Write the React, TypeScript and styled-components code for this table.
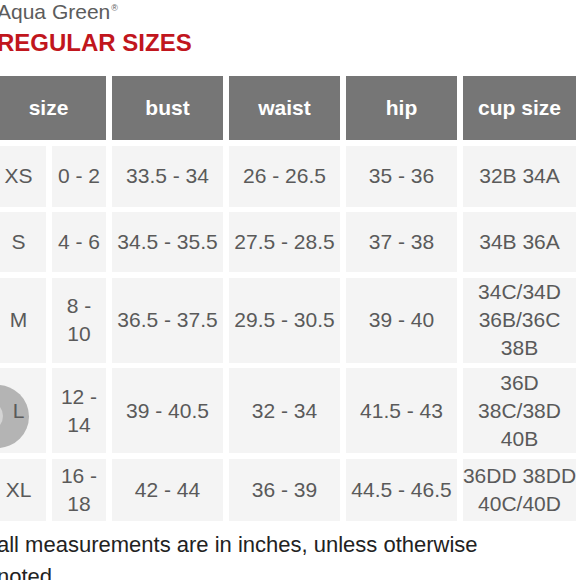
import React from 'react';
import styled, { createGlobalStyle } from 'styled-components';

const GlobalStyle = createGlobalStyle`
  html, body {
    margin: 0;
    padding: 0;
    background: #ffffff;
    overflow: hidden;
  }
  body {
    font-family: 'Liberation Sans', Arial, Helvetica, sans-serif;
  }
`;

const Page = styled.div`
  width: 590px;
  height: 580px;
  margin-left: -3px;
  overflow: hidden;
`;

const Brand = styled.div`
  font-size: 21px;
  line-height: 24px;
  color: #5c5c5c;
  white-space: nowrap;
`;

const Reg = styled.sup`
  font-size: 9px;
  vertical-align: top;
  position: relative;
  top: -4px;
  margin-left: 1px;
`;

const Title = styled.h1`
  margin: 5px 0 0;
  font-size: 24px;
  line-height: 28px;
  font-weight: bold;
  color: #c1161d;
  white-space: nowrap;
`;

const Table = styled.div`
  margin: 19px 0 0 -6px;
  display: grid;
  grid-template-columns: 55px 54px 111px 111px 111px 113px;
  grid-template-rows: 64px 61px 60px 85px 85px 62px;
  column-gap: 6px;
  row-gap: 5.5px;
`;

const HeadCell = styled.div<{ $span?: number }>`
  grid-column: span ${p => p.$span || 1};
  background: #767676;
  color: #ffffff;
  font-weight: bold;
  font-size: 21px;
  display: flex;
  align-items: center;
  justify-content: center;
  white-space: nowrap;
`;

const Cell = styled.div`
  position: relative;
  background: #f4f4f4;
  color: #5a5a5a;
  font-size: 21px;
  line-height: 28px;
  display: flex;
  align-items: center;
  justify-content: center;
  text-align: center;
  white-space: nowrap;
`;

const CellText = styled.span`
  position: relative;
  z-index: 1;
`;

const TouchButton = styled.div`
  position: absolute;
  left: -25px;
  top: 17px;
  width: 63px;
  height: 63px;
  border-radius: 50%;
  background: #b4b4b4;
  overflow: hidden;
`;

const TouchInner = styled.div`
  position: absolute;
  left: 7px;
  top: 16px;
  width: 30px;
  height: 30px;
  border-radius: 50%;
  background: #d4d4d4;
`;

const Note = styled.p`
  margin: 8px 0 0;
  font-size: 22px;
  line-height: 32px;
  color: #222222;
  width: 500px;
`;

type Row = {
  size: string;
  range: string;
  bust: string;
  waist: string;
  hip: string;
  cup: string;
  touch?: boolean;
};

const rows: Row[] = [
  { size: 'XS', range: '0 - 2', bust: '33.5 - 34', waist: '26 - 26.5', hip: '35 - 36', cup: '32B 34A' },
  { size: 'S', range: '4 - 6', bust: '34.5 - 35.5', waist: '27.5 - 28.5', hip: '37 - 38', cup: '34B 36A' },
  { size: 'M', range: '8 -\n10', bust: '36.5 - 37.5', waist: '29.5 - 30.5', hip: '39 - 40', cup: '34C/34D\n36B/36C\n38B' },
  { size: 'L', range: '12 -\n14', bust: '39 - 40.5', waist: '32 - 34', hip: '41.5 - 43', cup: '36D\n38C/38D\n40B', touch: true },
  { size: 'XL', range: '16 -\n18', bust: '42 - 44', waist: '36 - 39', hip: '44.5 - 46.5', cup: '36DD 38DD\n40C/40D' },
];

const lines = (text: string) =>
  text.split('\n').map((line, i) => (
    <React.Fragment key={i}>
      {i > 0 && <br />}
      {line}
    </React.Fragment>
  ));

export default function App() {
  return (
    <>
      <GlobalStyle />
      <Page>
        <Brand>
          Aqua Green<Reg>®</Reg>
        </Brand>
        <Title>REGULAR SIZES</Title>
        <Table>
          <HeadCell $span={2}>size</HeadCell>
          <HeadCell>bust</HeadCell>
          <HeadCell>waist</HeadCell>
          <HeadCell>hip</HeadCell>
          <HeadCell>cup size</HeadCell>
          {rows.map(row => (
            <React.Fragment key={row.size}>
              <Cell>
                {row.touch && (
                  <TouchButton>
                    <TouchInner />
                  </TouchButton>
                )}
                <CellText>{row.size}</CellText>
              </Cell>
              <Cell>{lines(row.range)}</Cell>
              <Cell>{row.bust}</Cell>
              <Cell>{row.waist}</Cell>
              <Cell>{row.hip}</Cell>
              <Cell>{lines(row.cup)}</Cell>
            </React.Fragment>
          ))}
        </Table>
        <Note>all measurements are in inches, unless otherwise noted</Note>
      </Page>
    </>
  );
}
